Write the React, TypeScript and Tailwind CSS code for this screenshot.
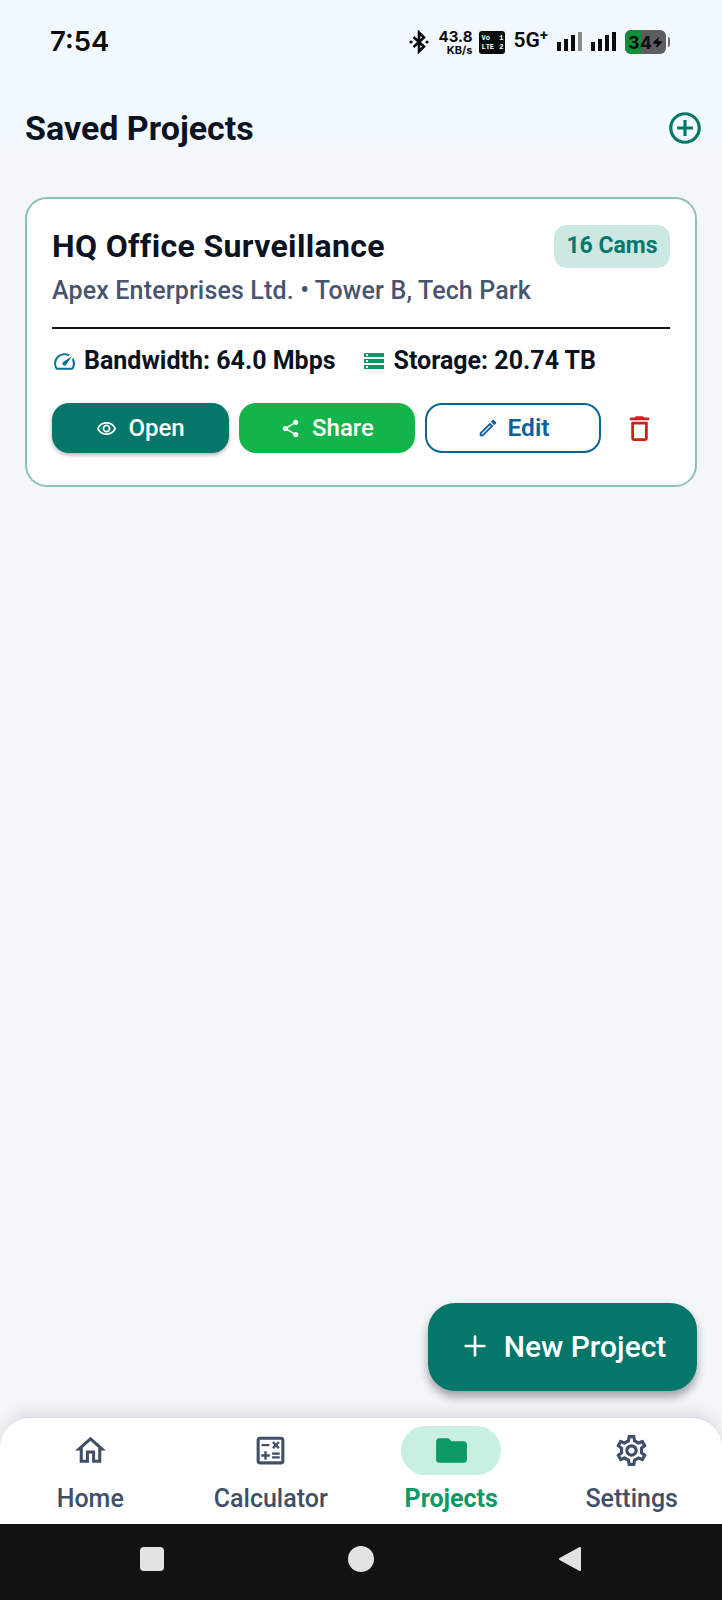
import { Plus, Zap } from 'lucide-react';
import {
  MdAddCircleOutline,
  MdFolder,
  MdOutlineCalculate,
  MdOutlineDelete,
  MdOutlineEdit,
  MdOutlineHome,
  MdOutlineRemoveRedEye,
  MdOutlineSettings,
  MdOutlineSpeed,
  MdShare,
  MdStorage,
} from 'react-icons/md';

function SignalBars({ dimLast }: { dimLast?: boolean }) {
  return (
    <svg width="26" height="20" viewBox="0 0 26 20" fill="#0a0a0a">
      <rect x="0" y="10" width="4" height="9" />
      <rect x="7" y="7" width="4" height="12" />
      <rect x="14" y="3" width="4" height="16" />
      <rect x="21" y="0" width="4" height="19" fill={dimLast ? '#8a8a8a' : '#0a0a0a'} />
    </svg>
  );
}

function BluetoothDots() {
  return (
    <svg width="20" height="24" viewBox="0 0 20 24" fill="none" stroke="#0a0a0a" strokeWidth="2.6">
      <path d="M4.5 7 L15 16.5 L10 21.5 V2.5 L15 7.5 L4.5 17" />
      <circle cx="2" cy="12" r="1.6" fill="#0a0a0a" stroke="none" />
      <circle cx="18" cy="12" r="1.6" fill="#0a0a0a" stroke="none" />
    </svg>
  );
}

function StatusBar() {
  return (
    <div className="h-[78px] flex items-center justify-between pl-[50px] pr-[52px] pt-[6px]">
      <span className="text-[27.5px] font-semibold text-[#0a0a0a] font-['Inter',sans-serif]">7:54</span>
      <div className="flex items-center text-[#0a0a0a] font-['Inter',sans-serif]">
        <BluetoothDots />
        <div className="ml-[10px] flex flex-col items-end font-bold leading-none gap-[1px]">
          <span className="text-[15px] leading-[15px]">43.8</span>
          <span className="text-[11px] leading-[11px]">KB/s</span>
        </div>
        <div className="ml-[7px] w-[26px] h-[23px] rounded-[3px] bg-[#0a0a0a] text-white text-[7px] font-bold leading-[9px] px-[2px] py-[3px] flex flex-col font-['Liberation_Mono',monospace]">
          <div className="flex justify-between"><span>Vo</span><span>1</span></div>
          <div className="flex justify-between"><span>LTE</span><span>2</span></div>
        </div>
        <span className="ml-[8px] text-[21px] font-semibold font-['Roboto',sans-serif] relative -top-[1px]">5G<sup className="text-[15px]">+</sup></span>
        <div className="ml-[9px]"><SignalBars dimLast /></div>
        <div className="ml-[8px]"><SignalBars /></div>
        <div className="ml-[8px] w-[41px] h-[24px] rounded-[6px] bg-[#5d5d60] overflow-hidden relative">
          <div className="w-[16px] h-full bg-[#0f8f3a]" />
          <div className="absolute inset-0 flex items-center justify-center text-[18px] font-bold">
            34<Zap size={11} fill="#0a0a0a" />
          </div>
        </div>
        <div className="ml-[2px] w-[2px] h-[10px] bg-[#6b6b6b] rounded-r-sm" />
      </div>
    </div>
  );
}

function ProjectCard() {
  return (
    <div className="bg-white border-2 border-[#8ac2bb] rounded-[22px] px-[25px] pt-[26px] pb-[32px]">
      <div className="flex items-start justify-between">
        <div className="min-w-0">
          <h2 className="text-[32px] tracking-[0.35px] leading-[42px] font-bold text-[#0b1220]">HQ Office Surveillance</h2>
          <p className="text-[25px] tracking-[0.15px] leading-[30px] mt-[9px] text-[#47566e] font-medium">
            Apex Enterprises Ltd. • Tower B, Tech Park
          </p>
        </div>
        <span className="h-[43px] w-[116px] rounded-[13px] bg-[#cde7e3] text-[#00796b] text-[23px] font-bold flex items-center justify-center">
          16 Cams
        </span>
      </div>

      <div className="h-[2px] bg-[#0f141c] mt-[21px]" />

      <div className="flex items-center mt-[16px] h-[32px] text-[25px] font-bold text-[#0b1220]">
        <MdOutlineSpeed size={25} className="text-[#0a6ea0]" />
        <span className="ml-[7px]">Bandwidth: 64.0 Mbps</span>
        <MdStorage size={24} className="text-[#0b9a63] ml-[26px]" />
        <span className="ml-[8px]">Storage: 20.74 TB</span>
      </div>

      <div className="flex items-center gap-[10px] mt-[26px]">
        <button className="w-[177px] h-[50px] rounded-[17px] bg-[#05776a] text-white text-[24px] font-medium flex items-center justify-center gap-[11px] shadow-[0_2px_4px_rgba(0,0,0,0.3)]">
          <MdOutlineRemoveRedEye size={21} />
          Open
        </button>
        <button className="w-[176px] h-[50px] rounded-[17px] bg-[#13b54a] text-white text-[24px] font-medium flex items-center justify-center gap-[11px]">
          <MdShare size={21} />
          Share
        </button>
        <button className="w-[176px] h-[50px] rounded-[17px] border-2 border-[#0a639b] text-[#0a5f9e] text-[24.5px] font-semibold flex items-center justify-center gap-[9px]">
          <MdOutlineEdit size={22} />
          Edit
        </button>
        <MdOutlineDelete size={33} className="text-[#d81b1b] ml-[12px]" />
      </div>
    </div>
  );
}

const navItems = [
  { label: 'Home', icon: MdOutlineHome },
  { label: 'Calculator', icon: MdOutlineCalculate },
  { label: 'Projects', icon: MdFolder, active: true },
  { label: 'Settings', icon: MdOutlineSettings },
];

function BottomNav() {
  return (
    <nav className="h-[107px] bg-white rounded-t-[30px] border-t border-[#d9dde8] grid grid-cols-4 shadow-[0_-6px_14px_rgba(0,0,0,0.09)]">
      {navItems.map((item) => {
        const Icon = item.icon;
        return (
          <div key={item.label} className="flex flex-col items-center pt-[8px]">
            <div className={`w-[100px] h-[49px] rounded-full flex items-center justify-center ${item.active ? 'bg-[#c8efdf] text-[#0b9a63]' : 'text-[#3f4f68]'}`}>
              <Icon size={37} />
            </div>
            <span className={`text-[25px] leading-[30px] mt-[9px] ${item.active ? 'font-bold text-[#0b9a63]' : 'font-medium text-[#3f4f68]'}`}>
              {item.label}
            </span>
          </div>
        );
      })}
    </nav>
  );
}

export default function App() {
  return (
    <div className="relative w-[722px] h-[1600px] flex flex-col bg-[#f4f6fa] font-['Roboto',sans-serif]">
      <div className="h-[170px] bg-gradient-to-b from-[#f1f8fe] via-[#f1f8fe] via-80% to-[#f4f6fa]">
        <StatusBar />
        <header className="flex items-center justify-between pl-[25px] pr-[18px] pt-[24px]">
          <h1 className="text-[34px] leading-[52px] font-bold text-[#0b1220]">Saved Projects</h1>
          <MdAddCircleOutline size={38} className="text-[#05776a]" />
        </header>
      </div>

      <main className="flex-1 px-[25px] pt-[27px]">
        <ProjectCard />
      </main>

      <button className="absolute left-[428px] top-[1303px] w-[269px] h-[88px] pb-[2px] rounded-[27px] bg-[#05776a] text-white text-[30px] font-medium flex items-center justify-center gap-[13px] shadow-[0_6px_10px_rgba(0,0,0,0.35)]">
        <Plus size={32} strokeWidth={2} />
        New Project
      </button>

      <BottomNav />

      <div className="h-[76px] bg-[#121212] flex items-center pb-[6px]">
        <div className="grid grid-cols-3 w-full px-[48px] items-center justify-items-center">
          <div className="w-[24px] h-[24px] rounded-[4px] bg-[#e2e2e2]" />
          <div className="w-[26px] h-[26px] rounded-full bg-[#e2e2e2]" />
          <svg width="24" height="28" viewBox="0 0 24 28">
            <path d="M22 3 L2 14 L22 25 Z" fill="#e2e2e2" stroke="#e2e2e2" strokeWidth="2" strokeLinejoin="round" />
          </svg>
        </div>
      </div>
    </div>
  );
}
